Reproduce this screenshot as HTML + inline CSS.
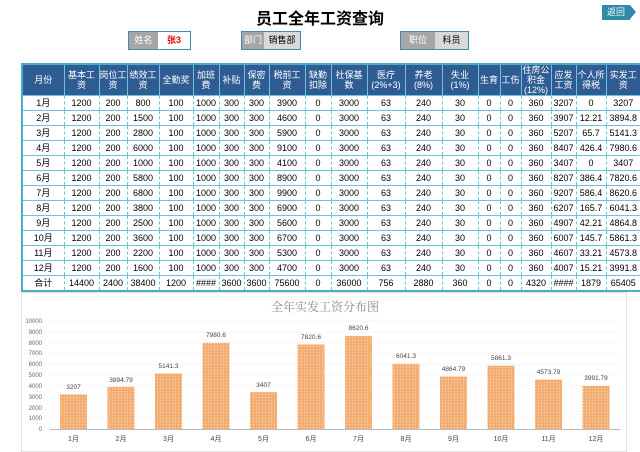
<!DOCTYPE html>
<html><head><meta charset="utf-8"><style>
*{margin:0;padding:0;box-sizing:border-box}
body{width:640px;height:448px;background:#fff;position:relative;overflow:hidden;font-family:"Liberation Sans","Noto Sans CJK SC",sans-serif;}
.title{position:absolute;left:0;width:640px;top:5px;text-align:center;font-size:16px;font-weight:bold;color:#000;}
.ret{position:absolute;left:602px;top:5px;width:28px;height:15px;background:#2e8aa6;color:#fff;font-size:9px;line-height:15px;text-align:center;}
.ret:after{content:"";position:absolute;right:-6px;top:0;border-left:6px solid #2e8aa6;border-top:7.5px solid transparent;border-bottom:7.5px solid transparent;}
.f{position:absolute;top:31px;height:19px;border:1px solid #3a8fae;display:flex;font-size:9px;line-height:17px;}
.f span{display:block;text-align:center}
.f .l{background:#a6a6a6;color:#fff}
table{position:absolute;left:21px;top:63px;width:619px;border-collapse:collapse;border:2px solid #4bacc6;table-layout:fixed}
td,th{font-size:9px;text-align:center;border-left:1px dashed #6cc3dd;border-bottom:1px solid #6cc3dd;height:15px;line-height:10px;padding:0;white-space:nowrap;overflow:hidden}
th{background:#2f5d93;color:#fff;font-weight:normal;height:29px;line-height:10px;border-left:1px solid #6cc3dd;white-space:normal}
.chart{position:absolute;left:21px;top:292px;width:606px;height:160px;border:1px solid #e0e0e0;}
</style></head><body>
<div class="title">员工全年工资查询</div>
<div class="ret">返回</div>
<div class="f" style="left:128px;width:63px"><span class="l" style="width:29px">姓名</span><span style="width:32px;background:#fff;color:#e00000;font-weight:bold">张3</span></div>
<div class="f" style="left:241px;width:60px"><span class="l" style="width:22px">部门</span><span style="width:36px;background:#d9d9d9">销售部</span></div>
<div class="f" style="left:400px;width:69px"><span class="l" style="width:34px">职位</span><span style="width:33px;background:#d9d9d9">科员</span></div>
<table>
<colgroup><col style="width:42px"><col style="width:35px"><col style="width:28px"><col style="width:32px"><col style="width:34px"><col style="width:26px"><col style="width:25px"><col style="width:25px"><col style="width:36px"><col style="width:26px"><col style="width:36px"><col style="width:38px"><col style="width:37px"><col style="width:36px"><col style="width:22px"><col style="width:21px"><col style="width:30px"><col style="width:25px"><col style="width:30px"><col style="width:35px"></colgroup>
<tr><th>月份</th><th>基本工资</th><th>岗位工资</th><th>绩效工资</th><th>全勤奖</th><th>加班费</th><th>补贴</th><th>保密费</th><th>税前工资</th><th>缺勤扣除</th><th>社保基数</th><th>医疗<br>(2%+3)</th><th>养老<br>(8%)</th><th>失业<br>(1%)</th><th>生育</th><th>工伤</th><th>住房公积金(12%)</th><th>应发工资</th><th>个人所得税</th><th>实发工资</th></tr>
<tr><td>1月</td><td>1200</td><td>200</td><td>800</td><td>100</td><td>1000</td><td>300</td><td>300</td><td>3900</td><td>0</td><td>3000</td><td>63</td><td>240</td><td>30</td><td>0</td><td>0</td><td>360</td><td>3207</td><td>0</td><td>3207</td></tr>
<tr><td>2月</td><td>1200</td><td>200</td><td>1500</td><td>100</td><td>1000</td><td>300</td><td>300</td><td>4600</td><td>0</td><td>3000</td><td>63</td><td>240</td><td>30</td><td>0</td><td>0</td><td>360</td><td>3907</td><td>12.21</td><td>3894.8</td></tr>
<tr><td>3月</td><td>1200</td><td>200</td><td>2800</td><td>100</td><td>1000</td><td>300</td><td>300</td><td>5900</td><td>0</td><td>3000</td><td>63</td><td>240</td><td>30</td><td>0</td><td>0</td><td>360</td><td>5207</td><td>65.7</td><td>5141.3</td></tr>
<tr><td>4月</td><td>1200</td><td>200</td><td>6000</td><td>100</td><td>1000</td><td>300</td><td>300</td><td>9100</td><td>0</td><td>3000</td><td>63</td><td>240</td><td>30</td><td>0</td><td>0</td><td>360</td><td>8407</td><td>426.4</td><td>7980.6</td></tr>
<tr><td>5月</td><td>1200</td><td>200</td><td>1000</td><td>100</td><td>1000</td><td>300</td><td>300</td><td>4100</td><td>0</td><td>3000</td><td>63</td><td>240</td><td>30</td><td>0</td><td>0</td><td>360</td><td>3407</td><td>0</td><td>3407</td></tr>
<tr><td>6月</td><td>1200</td><td>200</td><td>5800</td><td>100</td><td>1000</td><td>300</td><td>300</td><td>8900</td><td>0</td><td>3000</td><td>63</td><td>240</td><td>30</td><td>0</td><td>0</td><td>360</td><td>8207</td><td>386.4</td><td>7820.6</td></tr>
<tr><td>7月</td><td>1200</td><td>200</td><td>6800</td><td>100</td><td>1000</td><td>300</td><td>300</td><td>9900</td><td>0</td><td>3000</td><td>63</td><td>240</td><td>30</td><td>0</td><td>0</td><td>360</td><td>9207</td><td>586.4</td><td>8620.6</td></tr>
<tr><td>8月</td><td>1200</td><td>200</td><td>3800</td><td>100</td><td>1000</td><td>300</td><td>300</td><td>6900</td><td>0</td><td>3000</td><td>63</td><td>240</td><td>30</td><td>0</td><td>0</td><td>360</td><td>6207</td><td>165.7</td><td>6041.3</td></tr>
<tr><td>9月</td><td>1200</td><td>200</td><td>2500</td><td>100</td><td>1000</td><td>300</td><td>300</td><td>5600</td><td>0</td><td>3000</td><td>63</td><td>240</td><td>30</td><td>0</td><td>0</td><td>360</td><td>4907</td><td>42.21</td><td>4864.8</td></tr>
<tr><td>10月</td><td>1200</td><td>200</td><td>3600</td><td>100</td><td>1000</td><td>300</td><td>300</td><td>6700</td><td>0</td><td>3000</td><td>63</td><td>240</td><td>30</td><td>0</td><td>0</td><td>360</td><td>6007</td><td>145.7</td><td>5861.3</td></tr>
<tr><td>11月</td><td>1200</td><td>200</td><td>2200</td><td>100</td><td>1000</td><td>300</td><td>300</td><td>5300</td><td>0</td><td>3000</td><td>63</td><td>240</td><td>30</td><td>0</td><td>0</td><td>360</td><td>4607</td><td>33.21</td><td>4573.8</td></tr>
<tr><td>12月</td><td>1200</td><td>200</td><td>1600</td><td>100</td><td>1000</td><td>300</td><td>300</td><td>4700</td><td>0</td><td>3000</td><td>63</td><td>240</td><td>30</td><td>0</td><td>0</td><td>360</td><td>4007</td><td>15.21</td><td>3991.8</td></tr>
<tr><td>合计</td><td>14400</td><td>2400</td><td>38400</td><td>1200</td><td>####</td><td>3600</td><td>3600</td><td>75600</td><td>0</td><td>36000</td><td>756</td><td>2880</td><td>360</td><td>0</td><td>0</td><td>4320</td><td>####</td><td>1879</td><td>65405</td></tr>
</table>
<div class="chart"></div>
<svg style="position:absolute;left:0;top:0" width="640" height="448" font-family="Liberation Sans, Noto Sans CJK SC, sans-serif">
<defs><pattern id="p" width="3" height="3" patternUnits="userSpaceOnUse"><rect width="3" height="3" fill="#f3ad73"/><circle cx="1.5" cy="1.5" r="0.6" fill="#fbd9b8"/></pattern></defs>
<text x="325" y="311" font-size="12" fill="#8a8a8a" text-anchor="middle" font-family="Liberation Serif, Noto Serif CJK SC, serif">全年实发工资分布图</text>
<g font-size="6" fill="#666" text-anchor="end">
<text x="42" y="323">10000</text><text x="42" y="334">9000</text><text x="42" y="345">8000</text><text x="42" y="355">7000</text><text x="42" y="366">6000</text><text x="42" y="377">5000</text><text x="42" y="388">4000</text><text x="42" y="399">3000</text><text x="42" y="410">2000</text><text x="42" y="420">1000</text><text x="42" y="431">0</text></g>
<g stroke="#eee" stroke-width="0.5"><line x1="50" x2="620" y1="321" y2="321"/><line x1="50" x2="620" y1="332" y2="332"/><line x1="50" x2="620" y1="343" y2="343"/><line x1="50" x2="620" y1="353" y2="353"/><line x1="50" x2="620" y1="364" y2="364"/><line x1="50" x2="620" y1="375" y2="375"/><line x1="50" x2="620" y1="386" y2="386"/><line x1="50" x2="620" y1="397" y2="397"/><line x1="50" x2="620" y1="408" y2="408"/><line x1="50" x2="620" y1="418" y2="418"/></g>
<line x1="50" x2="620" y1="429.5" y2="429.5" stroke="#bbb"/>
<g fill="url(#p)">
<rect x="60" y="394.4" width="27" height="34.6"/><rect x="107.5" y="386.9" width="27" height="42.1"/><rect x="155" y="373.5" width="27" height="55.5"/><rect x="202.5" y="342.8" width="27" height="86.2"/><rect x="250" y="392.2" width="27" height="36.8"/><rect x="297.5" y="344.5" width="27" height="84.5"/><rect x="345" y="335.9" width="27" height="93.1"/><rect x="392.5" y="363.8" width="27" height="65.2"/><rect x="440" y="376.5" width="27" height="52.5"/><rect x="487.5" y="365.7" width="27" height="63.3"/><rect x="535" y="379.6" width="27" height="49.4"/><rect x="582.5" y="385.9" width="27" height="43.1"/></g>
<g font-size="6.5" fill="#444" text-anchor="middle">
<text x="73.5" y="389">3207</text><text x="121" y="382">3894.79</text><text x="168.5" y="368">5141.3</text><text x="216" y="337">7980.6</text><text x="263.5" y="387">3407</text><text x="311" y="339">7820.6</text><text x="358.5" y="330">8620.6</text><text x="406" y="358">6041.3</text><text x="453.5" y="371">4864.79</text><text x="501" y="360">5861.3</text><text x="548.5" y="374">4573.79</text><text x="596" y="380">3991.79</text></g>
<g font-size="7" fill="#444" text-anchor="middle">
<text x="73.5" y="441">1月</text><text x="121" y="441">2月</text><text x="168.5" y="441">3月</text><text x="216" y="441">4月</text><text x="263.5" y="441">5月</text><text x="311" y="441">6月</text><text x="358.5" y="441">7月</text><text x="406" y="441">8月</text><text x="453.5" y="441">9月</text><text x="501" y="441">10月</text><text x="548.5" y="441">11月</text><text x="596" y="441">12月</text></g>
</svg>
</body></html>
